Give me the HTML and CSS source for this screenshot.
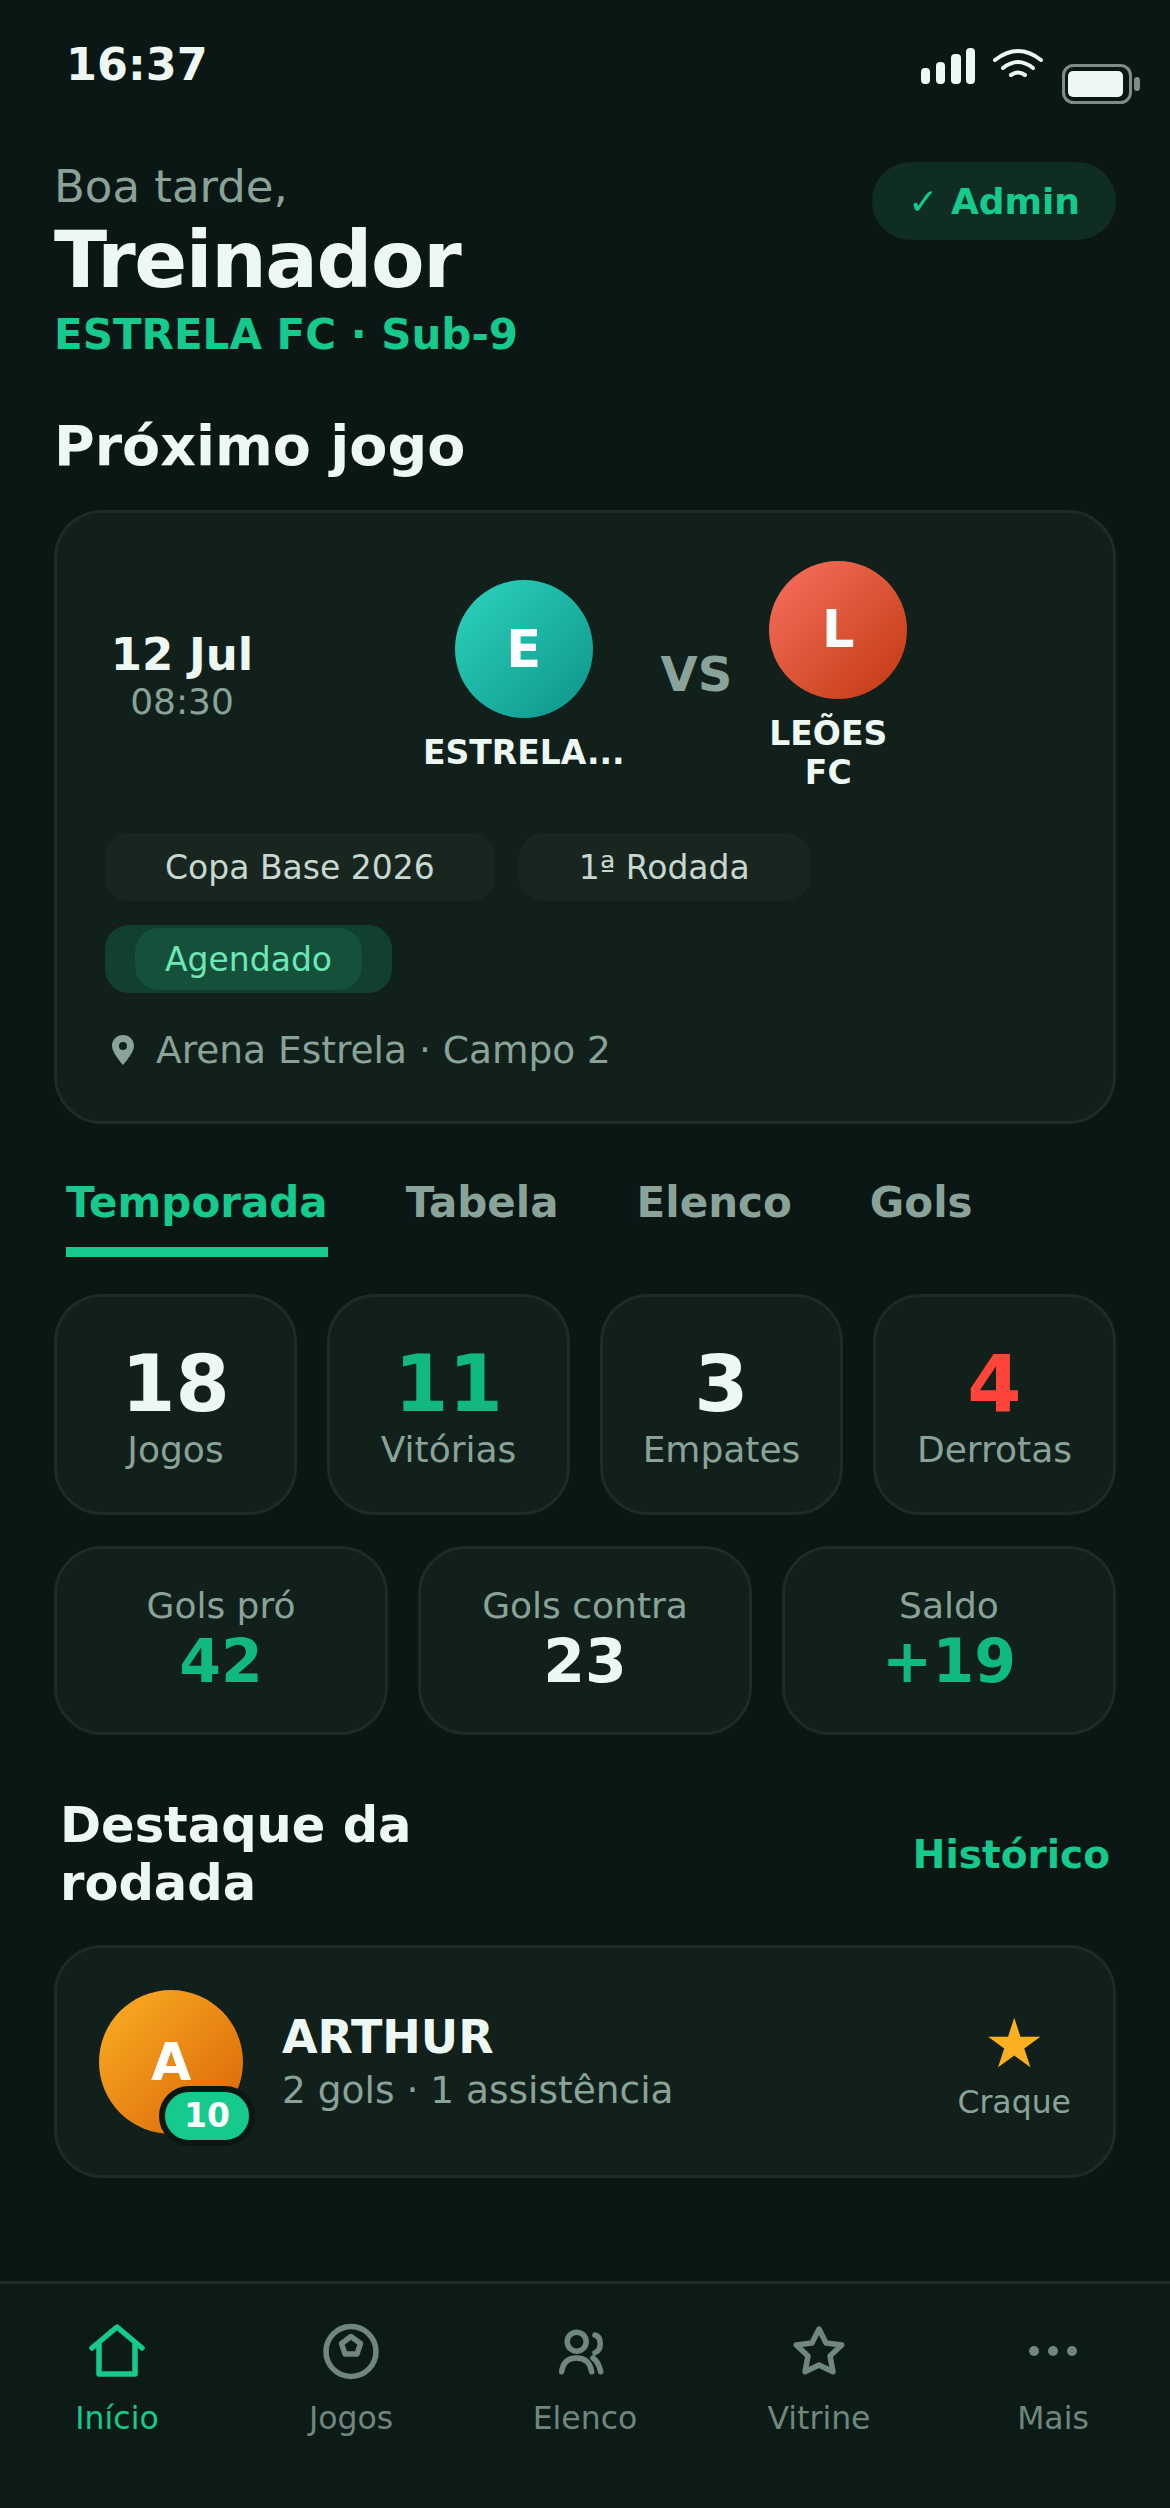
FILE: index.html
```html
<!DOCTYPE html>
<html lang="pt-BR">
<head>
    <meta charset="UTF-8">
    <meta name="viewport" content="width=device-width, initial-scale=1.0">
    <title>Estrela FC</title>
    <link rel="stylesheet" href="styles.css">
</head>
<body>
    <!-- Status bar -->
    <div class="status-bar">
        <div class="status-time">16:37</div>
        <svg class="status-icons" width="222" height="60" viewBox="0 0 222 60">
            <g fill="#eef8f3">
                <rect x="1" y="20" width="9" height="16" rx="4"/>
                <rect x="16" y="14" width="9" height="22" rx="4"/>
                <rect x="31" y="6" width="10" height="30" rx="4"/>
                <rect x="46" y="0" width="9" height="36" rx="4"/>
                <rect x="148" y="23" width="55" height="26" rx="5"/>
            </g>
            <g fill="none" stroke="#eef8f3" stroke-width="4" stroke-linecap="round">
                <path d="M75 12Q98 -6 121 12"/>
                <path d="M83 20Q98 8 113 20"/>
                <path d="M91 27Q98 22 105 27"/>
            </g>
            <rect x="143.500" y="17.500" width="67" height="37" rx="10" fill="none" stroke="#7d8e88" stroke-width="3"/>
            <rect x="214" y="29" width="6" height="14" rx="3" fill="#7d8e88"/>
        </svg>
    </div>

    <main class="content">
        <!-- Greeting -->
        <div class="greeting">
            <div>
                <div class="greeting-hello">Boa tarde,</div>
                <div class="greeting-name">Treinador</div>
                <div class="greeting-team">ESTRELA FC · Sub-9</div>
            </div>
            <div class="admin-pill">✓ Admin</div>
        </div>

        <h2 class="section-title">Próximo jogo</h2>

        <!-- Next match -->
        <div class="card match-card">
            <div class="match-row">
                <div class="match-date">
                    <div class="match-day">12 Jul</div>
                    <div class="match-hour">08:30</div>
                </div>
                <div class="team">
                    <div class="team-badge team-badge-home">E</div>
                    <div class="team-name">ESTRELA...</div>
                </div>
                <div class="match-vs">VS</div>
                <div class="team team-away">
                    <div class="team-badge team-badge-away">L</div>
                    <div class="team-name">LEÕES FC</div>
                </div>
            </div>
            <div class="chips">
                <div class="chip">Copa Base 2026</div>
                <div class="chip">1ª Rodada</div>
                <div class="chip-status"><span class="chip-status-inner">Agendado</span></div>
            </div>
            <div class="match-place">
                <svg width="22" height="30" viewBox="0 0 22 30">
                    <path fill="#8aa399" fill-rule="evenodd" d="M11 0C4.900 0 0 4.800 0 10.800 0 18 11 30 11 30S22 18 22 10.800C22 4.800 17.100 0 11 0ZM11 7a4 4 0 1 1 0 8 4 4 0 0 1 0-8Z"/>
                </svg>
                <span>Arena Estrela · Campo 2</span>
            </div>
        </div>

        <!-- Tabs -->
        <div class="tabs">
            <div class="tab tab-active">Temporada</div>
            <div class="tab">Tabela</div>
            <div class="tab">Elenco</div>
            <div class="tab">Gols</div>
        </div>

        <!-- Season numbers -->
        <div class="stats stats-four">
            <div class="card stat">
                <div class="stat-big">18</div>
                <div class="stat-label">Jogos</div>
            </div>
            <div class="card stat">
                <div class="stat-big text-green">11</div>
                <div class="stat-label">Vitórias</div>
            </div>
            <div class="card stat">
                <div class="stat-big">3</div>
                <div class="stat-label">Empates</div>
            </div>
            <div class="card stat">
                <div class="stat-big text-red">4</div>
                <div class="stat-label">Derrotas</div>
            </div>
        </div>
        <div class="stats stats-three">
            <div class="card stat">
                <div class="stat-label">Gols pró</div>
                <div class="stat-mid text-green">42</div>
            </div>
            <div class="card stat">
                <div class="stat-label">Gols contra</div>
                <div class="stat-mid">23</div>
            </div>
            <div class="card stat">
                <div class="stat-label">Saldo</div>
                <div class="stat-mid text-green">+19</div>
            </div>
        </div>

        <!-- Highlight -->
        <div class="highlight-head">
            <h2 class="highlight-title">Destaque da rodada</h2>
            <div class="highlight-link">Histórico</div>
        </div>
        <div class="card player-card">
            <div class="player-avatar">
                A
                <span class="player-number">10</span>
            </div>
            <div class="player-info">
                <div class="player-name">ARTHUR</div>
                <div class="player-sub">2 gols · 1 assistência</div>
            </div>
            <div class="player-award">
                <div class="player-star">★</div>
                <div class="player-award-label">Craque</div>
            </div>
        </div>
    </main>

    <!-- Bottom navigation -->
    <nav class="bottom-nav">
        <div class="nav-item nav-item-active">
            <svg class="nav-icon" viewBox="0 0 60 60">
                <path d="M5 27 30 6l25 21M12 22v31h36V22"/>
            </svg>
            <span>Início</span>
        </div>
        <div class="nav-item">
            <svg class="nav-icon" viewBox="0 0 60 60">
                <circle cx="30" cy="30.500" r="25"/>
                <path d="M30 15.500 39.500 22.500 36 33H24L20.500 22.500Z"/>
            </svg>
            <span>Jogos</span>
        </div>
        <div class="nav-item">
            <svg class="nav-icon" viewBox="0 0 60 60">
                <circle cx="21.700" cy="20.700" r="9.500"/>
                <path d="M6.700 50.700C8 41 14 37 21.700 37S35 41 36.700 50.700M40 14C47 16 47 29 40 31.700M38 37C42 40 44.500 44 45.700 50.700"/>
            </svg>
            <span>Elenco</span>
        </div>
        <div class="nav-item">
            <svg class="nav-icon" viewBox="0 0 60 60">
                <path d="M30 8 37 22 52.700 24 41 35 44 50.700 30 44 16 50.700 19 35 7.300 24 23 22Z"/>
            </svg>
            <span>Vitrine</span>
        </div>
        <div class="nav-item">
            <svg class="nav-icon nav-icon-dots" viewBox="0 0 60 60">
                <circle cx="11" cy="30" r="5"/>
                <circle cx="30" cy="30" r="5"/>
                <circle cx="49" cy="30" r="5"/>
            </svg>
            <span>Mais</span>
        </div>
    </nav>
</body>
</html>
```

FILE: styles.css
```css
/* Base */
html, body {
    margin: 0;
    padding: 0;
    height: 2508px;
    background-color: #0b1714;
    color: #eef8f3;
    font-family: "DejaVu Sans", "Noto Sans", sans-serif;
}

body {
    display: flex;
    flex-direction: column;
    overflow: hidden;
}

.text-green {
    color: #10b981;
}

.text-red {
    color: #ff453a;
}

/* Status bar */
.status-bar {
    display: flex;
    justify-content: space-between;
    height: 162px;
    padding: 0 28px 0 66px;
    box-sizing: border-box;
}

.status-time {
    margin-top: 36px;
    font-size: 44.5px;
    line-height: 58px;
    font-weight: bold;
}

.status-icons {
    margin-top: 48px;
}

/* Main column */
.content {
    flex: 1;
    padding: 0 54px;
}

.card {
    background-color: #11201b;
    border: 3px solid #1c2c27;
    box-sizing: border-box;
}

/* Greeting */
.greeting {
    display: flex;
    justify-content: space-between;
    align-items: flex-start;
}

.greeting-hello {
    font-size: 45px;
    line-height: 50px;
    color: #8aa399;
}

.greeting-name {
    font-size: 78px;
    line-height: 96px;
    font-weight: bold;
    letter-spacing: -1.4px;
}

.greeting-team {
    font-size: 42px;
    line-height: 54px;
    font-weight: bold;
    color: #16c98d;
}

.admin-pill {
    display: flex;
    align-items: center;
    height: 78px;
    padding: 0 36px;
    border-radius: 39px;
    background-color: #0f2d22;
    color: #16c98d;
    font-size: 36px;
    font-weight: bold;
}

.section-title {
    margin: 48px 0 28px;
    font-size: 55.5px;
    line-height: 72px;
    font-weight: bold;
}

/* Next match */
.match-card {
    height: 614px;
    padding: 46px 48px 0;
    border-radius: 48px;
}

.match-row {
    display: flex;
    align-items: center;
    gap: 36px;
    height: 230px;
}

.match-date {
    width: 156px;
    margin-right: 127px;
    margin-left: -1px;
    padding-top: 4px;
    text-align: center;
}

.match-day {
    font-size: 45px;
    line-height: 51px;
    font-weight: bold;
}

.match-hour {
    font-size: 36px;
    line-height: 44px;
    color: #8aa399;
}

.team {
    display: flex;
    flex-direction: column;
    align-items: center;
    padding-top: 4px;
}

.team-away {
    align-items: flex-start;
}

.team-badge {
    display: flex;
    align-items: center;
    justify-content: center;
    width: 138px;
    height: 138px;
    border-radius: 50%;
    color: #fff;
    font-size: 51px;
    font-weight: bold;
}

.team-badge-home {
    background: linear-gradient(135deg, #2dd4bf, #0d9488);
}

.team-badge-away {
    background: linear-gradient(135deg, #f87160, #c2380f);
}

.team-name {
    margin-top: 15px;
    font-size: 33px;
    line-height: 39px;
    font-weight: bold;
    text-align: center;
}

.team-away .team-name {
    width: min-content;
}

.match-vs {
    margin-right: 1px;
    font-size: 48px;
    font-weight: bold;
    color: #8aa399;
}

.chips {
    display: flex;
    flex-wrap: wrap;
    gap: 24px;
    margin-top: 44px;
}

.chip {
    display: flex;
    align-items: center;
    height: 68px;
    padding: 0 60px;
    border-radius: 24px;
    background-color: #18261f;
    color: #c7d8d0;
    font-size: 33px;
}

.chip-status {
    display: flex;
    align-items: center;
    height: 68px;
    padding: 0 30px;
    border-radius: 24px;
    background-color: #11402f;
}

.chip-status-inner {
    display: flex;
    align-items: center;
    height: 62px;
    padding: 0 30px;
    border-radius: 24px;
    background-color: #14503a;
    color: #6ee7b7;
    font-size: 33px;
}

.match-place {
    display: flex;
    align-items: center;
    gap: 22px;
    margin-top: 35px;
    padding-left: 7px;
    color: #8aa399;
    font-size: 37.5px;
}

/* Tabs */
.tabs {
    display: flex;
    gap: 78px;
    margin-top: 50px;
    padding-left: 12px;
}

.tab {
    padding-bottom: 15px;
    border-bottom: 10px solid transparent;
    color: #8aa399;
    font-size: 42px;
    line-height: 58px;
    font-weight: bold;
}

.tab-active {
    border-bottom-color: #16c98d;
    color: #16c98d;
}

/* Season numbers */
.stats {
    display: grid;
    gap: 30px;
}

.stats-four {
    grid-template-columns: repeat(4, 1fr);
    margin-top: 37px;
}

.stats-three {
    grid-template-columns: repeat(3, 1fr);
    margin-top: 31px;
}

.stat {
    display: flex;
    flex-direction: column;
    align-items: center;
    justify-content: center;
    border-radius: 48px;
}

.stats-four .stat {
    height: 221px;
    padding-top: 4px;
}

.stats-three .stat {
    height: 189px;
    padding-bottom: 4px;
}

.stat-big {
    font-size: 78px;
    line-height: 87px;
    font-weight: bold;
}

.stat-mid {
    font-size: 60px;
    line-height: 66px;
    font-weight: bold;
}

.stat-label {
    color: #8aa399;
    font-size: 36px;
    line-height: 44px;
}

/* Highlight */
.highlight-head {
    display: flex;
    justify-content: space-between;
    align-items: center;
    margin-top: 61px;
    padding: 0 6px;
}

.highlight-title {
    width: 400px;
    margin: 0;
    font-size: 49.5px;
    line-height: 58px;
    font-weight: bold;
}

.highlight-link {
    color: #16c98d;
    font-size: 39px;
    font-weight: bold;
}

.player-card {
    display: flex;
    align-items: center;
    height: 233px;
    margin-top: 33px;
    padding: 0 42px;
    border-radius: 48px;
}

.player-avatar {
    position: relative;
    display: flex;
    flex: none;
    align-items: center;
    justify-content: center;
    width: 144px;
    height: 144px;
    border-radius: 50%;
    background: linear-gradient(135deg, #fbb024, #d96206);
    color: #fff;
    font-size: 52px;
    font-weight: bold;
}

.player-number {
    position: absolute;
    right: -12px;
    bottom: -12px;
    display: flex;
    align-items: center;
    justify-content: center;
    width: 84px;
    height: 48px;
    border: 6px solid #0b1714;
    border-radius: 30px;
    background-color: #16c98d;
    color: #fff;
    font-size: 33px;
}

.player-info {
    flex: 1;
    margin-left: 39px;
}

.player-name {
    font-size: 46px;
    line-height: 56px;
    font-weight: bold;
}

.player-sub {
    color: #8aa399;
    font-size: 37.5px;
    line-height: 50px;
}

.player-award {
    padding-top: 8px;
    text-align: center;
}

.player-star {
    color: #fbb024;
    font-size: 68px;
    line-height: 72px;
}

.player-award-label {
    color: #8aa399;
    font-size: 31.5px;
    line-height: 44px;
}

/* Bottom navigation */
.bottom-nav {
    display: grid;
    grid-template-columns: repeat(5, 1fr);
    height: 227px;
    box-sizing: border-box;
    padding-top: 37px;
    border-top: 3px solid #1c2c27;
    background-color: #0d1b17;
}

.nav-item {
    display: flex;
    flex-direction: column;
    align-items: center;
    gap: 15px;
    color: #6f877d;
    font-size: 31.5px;
    line-height: 44px;
}

.nav-item-active {
    color: #16c98d;
}

.nav-icon {
    width: 60px;
    height: 60px;
    fill: none;
    stroke: currentColor;
    stroke-width: 5.5;
    stroke-linecap: round;
    stroke-linejoin: round;
}

.nav-icon-dots {
    fill: currentColor;
    stroke: none;
}
```
